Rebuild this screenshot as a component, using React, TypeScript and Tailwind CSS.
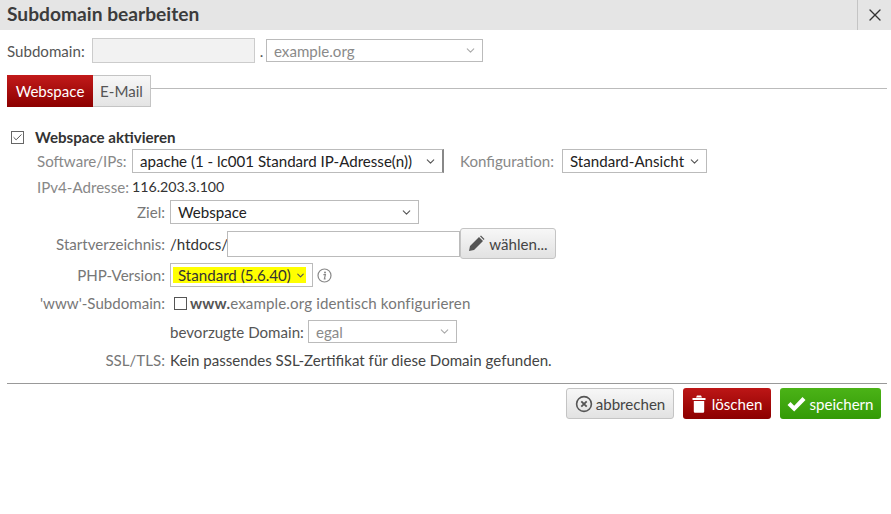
import { Check, ChevronDown, X } from 'lucide-react'

const FONT = "font-['Lato','Noto_Sans',sans-serif]"

function FakeSelect({ value, className, disabled }: { value: string; className: string; disabled?: boolean }) {
  return (
    <div
      className={`flex items-center justify-between border border-[#bbbbbb] bg-white pl-[7px] pr-[5px] ${
        disabled ? 'text-[#8a8a8a]' : 'text-[#222222]'
      } ${className}`}
    >
      <span className="whitespace-nowrap">{value}</span>
      <ChevronDown className={`w-[13px] h-[13px] ${disabled ? 'text-[#aaaaaa]' : 'text-[#555555]'}`} strokeWidth={2} />
    </div>
  )
}

function Row({ label, className, children }: { label: string; className: string; children: React.ReactNode }) {
  return (
    <div className={`flex items-center ${className}`}>
      <div className="w-[165px] shrink-0 text-right text-[#777777] whitespace-nowrap">{label}</div>
      <div className="ml-[5px] flex items-center">{children}</div>
    </div>
  )
}

export default function App() {
  return (
    <div className={`w-[891px] h-[514px] overflow-hidden bg-white text-[15.1px] leading-[20px] text-[#333333] ${FONT}`}>
      {/* Title bar */}
      <div className="flex h-[30px] items-center justify-between bg-[#e5e5e5]">
        <h1 className="pb-[3px] pl-[7px] text-[19.2px] font-bold text-[#3c3c3c]">Subdomain bearbeiten</h1>
        <div className="flex h-full w-[34px] items-center justify-center border-l border-[#c4c4c4]">
          <X className="w-[20px] h-[20px] text-[#333333]" strokeWidth={1.6} />
        </div>
      </div>

      {/* Subdomain */}
      <div className="mt-[8px] flex h-[25px] items-center pl-[7px]">
        <span className="w-[85px] text-[#555555]">Subdomain:</span>
        <div className="h-[25px] w-[163px] border border-[#cccccc] bg-[#f2f2f2]" />
        <span className="ml-[2px] w-[9px] text-center text-[#555555]">.</span>
        <FakeSelect value="example.org" disabled className="h-[23px] w-[217px]" />
      </div>

      {/* Tabs */}
      <div className="mt-[12px] flex h-[32px] items-start pl-[7px] pr-[4px]">
        <div className="flex h-[32px] w-[86px] items-center justify-center bg-gradient-to-b from-[#c21a1a] to-[#8c0000] text-white">
          Webspace
        </div>
        <div className="flex h-[32px] w-[58px] items-center justify-center border border-l-0 border-[#c4c4c4] bg-gradient-to-b from-[#f7f7f7] to-[#e4e4e4] text-[#555555]">
          E-Mail
        </div>
        <div className="mt-[13px] h-px flex-1 bg-[#bbbbbb]" />
      </div>

      {/* Webspace aktivieren */}
      <div className="mt-[20px] flex h-[20px] items-center pl-[11px]">
        <div className="flex h-[13px] w-[13px] items-center justify-center border border-[#666666] bg-white">
          <Check className="w-[11px] h-[11px] text-[#444444]" strokeWidth={2} />
        </div>
        <span className="ml-[11px] font-bold text-[#333333]">Webspace aktivieren</span>
      </div>

      {/* Software */}
      <div className="mt-[2px] flex h-[24px] items-center pl-[37px]">
        <span className="w-[95px] whitespace-nowrap text-[#888888]">Software/IPs:</span>
        <FakeSelect value="apache (1 - lc001 Standard IP-Adresse(n))" className="h-[24px] w-[312px] border-r-2 border-r-[#888888]" />
        <span className="ml-[16px] w-[102px] text-[#888888]">Konfiguration:</span>
        <FakeSelect value="Standard-Ansicht" className="h-[24px] w-[145px]" />
      </div>

      {/* IPv4 */}
      <div className="mt-[4px] flex h-[20px] items-center pl-[37px]">
        <span className="w-[95px] whitespace-nowrap text-[#888888]">IPv4-Adresse:</span>
        <span className="text-[14.2px] text-[#333333]">116.203.3.100</span>
      </div>

      <Row label="Ziel:" className="mt-[3px] h-[24px]">
        <FakeSelect value="Webspace" className="h-[24px] w-[249px]" />
      </Row>

      <Row label="Startverzeichnis:" className="mt-[4px] h-[31px]">
        <span className="w-[57px] text-[#333333]">/htdocs/</span>
        <div className="h-[26px] w-[233px] border border-[#bbbbbb] bg-white" />
        <div className="flex h-[31px] w-[96px] items-center justify-center gap-[4px] rounded-[3px] border border-[#c4c4c4] bg-gradient-to-b from-[#f7f7f7] to-[#e2e2e2] text-[#444444]">
          <svg width="17" height="17" viewBox="0 0 17 17">
            <path d="M1 16l1-5L11 2l4 4-9 9z M12 1.2l1-.7 3.5 3.5-.8 1z" fill="#555555" />
          </svg>
          wählen...
        </div>
      </Row>

      <Row label="PHP-Version:" className="mt-[4px] h-[24px]">
        <div className="flex h-[24px] w-[143px] items-center border border-[#bbbbbb] bg-white pl-[2px]">
          <div className="flex h-[16px] w-[133px] items-center justify-between bg-[#ffff00] pl-[5px] text-[#333333]">
            <span className="whitespace-nowrap">Standard (5.6.40)</span>
            <ChevronDown className="w-[11px] h-[11px] text-[#555555]" strokeWidth={2.5} />
          </div>
        </div>
        <svg className="ml-[4px]" width="15" height="15" viewBox="0 0 15 15" fill="none">
          <circle cx="7.5" cy="7.5" r="6.5" stroke="#888888" strokeWidth="1.2" />
          <circle cx="8" cy="4.4" r="1" fill="#888888" />
          <path d="M6.4 6.6h2l-1 4.2h1.2" stroke="#888888" strokeWidth="1.2" />
        </svg>
      </Row>

      <Row label="'www'-Subdomain:" className="mt-[4px] h-[24px]">
        <div className="ml-[4px] h-[13px] w-[13px] border border-[#555555] bg-white" />
        <span className="ml-[3px] whitespace-nowrap tracking-[0.13px] text-[#777777]">
          <b className="text-[#555555]">www.</b>example.org identisch konfigurieren
        </span>
      </Row>

      <div className="mt-[5px] flex h-[23px] items-center pl-[170px]">
        <span className="w-[138px] whitespace-nowrap text-[#555555]">bevorzugte Domain:</span>
        <FakeSelect value="egal" disabled className="h-[23px] w-[149px]" />
      </div>

      <Row label="SSL/TLS:" className="mt-[7px] h-[20px]">
        <span className="whitespace-nowrap text-[#444444]">Kein passendes SSL-Zertifikat für diese Domain gefunden.</span>
      </Row>

      <div className="ml-[7px] mr-[4px] mt-[13px] h-px bg-[#999999]" />

      {/* Footer buttons */}
      <div className="mt-[4px] flex justify-end gap-[9px] pr-[10px]">
        <div className="flex h-[31px] w-[108px] items-center justify-center gap-[3px] rounded-[3px] border border-[#c4c4c4] bg-gradient-to-b from-[#f7f7f7] to-[#e2e2e2] text-[#444444]">
          <svg width="18" height="18" viewBox="0 0 18 18" fill="none">
            <circle cx="9" cy="9" r="7.4" stroke="#555555" strokeWidth="1.6" />
            <path d="M6.3 6.3l5.4 5.4M11.7 6.3l-5.4 5.4" stroke="#555555" strokeWidth="1.8" />
          </svg>
          abbrechen
        </div>
        <div className="flex h-[31px] w-[88px] items-center justify-center gap-[6px] rounded-[3px] bg-gradient-to-b from-[#bd1616] to-[#8c0000] text-white">
          <svg width="14" height="18" viewBox="0 0 14 18">
            <path d="M0.5 3h13v2h-13z M5 0.5h4l1 2H4z M1.8 6h10.4v10.5a1.2 1.2 0 0 1-1.2 1.2H3a1.2 1.2 0 0 1-1.2-1.2z" fill="white" />
          </svg>
          löschen
        </div>
        <div className="flex h-[31px] w-[101px] items-center justify-center gap-[3px] rounded-[3px] bg-gradient-to-b from-[#4bb317] to-[#339a06] text-white">
          <svg width="19" height="16" viewBox="0 0 19 16">
            <path d="M0.5 9l3-3 3.7 3.7L15.5 1l3 3L7.2 15.5z" fill="white" />
          </svg>
          speichern
        </div>
      </div>
    </div>
  )
}
